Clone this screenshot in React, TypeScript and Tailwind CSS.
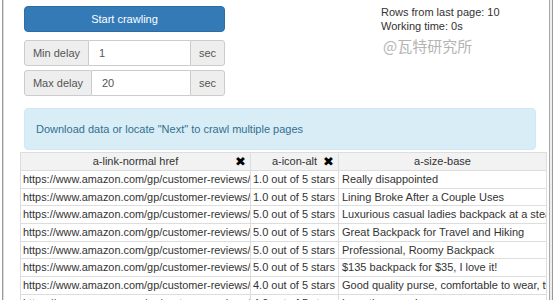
const ROWS = [
  ["1.0 out of 5 stars", "Really disappointed"],
  ["1.0 out of 5 stars", "Lining Broke After a Couple Uses"],
  ["5.0 out of 5 stars", "Luxurious casual ladies backpack at a steal"],
  ["5.0 out of 5 stars", "Great Backpack for Travel and Hiking"],
  ["5.0 out of 5 stars", "Professional, Roomy Backpack"],
  ["5.0 out of 5 stars", "$135 backpack for $35, I love it!"],
  ["4.0 out of 5 stars", "Good quality purse, comfortable to wear, two thumbs up"],
  ["4.0 out of 5 stars", "Love the purse!"],
];

const HREF = "https://www.amazon.com/gp/customer-reviews/R2KX0ZQ8Y1S9KD";

const InputGroup = ({ label, value, labelWidth }: { label: string; value: string; labelWidth: string }) => {
  return (
    <div className="flex h-[26px] w-[201px] text-[11px]">
      <div
        className={`${labelWidth} flex items-center justify-center rounded-l-[3px] border border-[#cccccc] bg-[#eeeeee] text-[#555555]`}
      >
        {label}
      </div>
      <div className="flex flex-1 items-center border-y border-[#cccccc] bg-white pl-[10px] text-[#555555]">
        {value}
      </div>
      <div className="flex w-[35px] items-center justify-center rounded-r-[3px] border border-[#cccccc] bg-[#eeeeee] text-[#555555]">
        sec
      </div>
    </div>
  );
};

const HeaderCell = ({ label, closable }: { label: string; closable: boolean }) => {
  return (
    <th className="relative h-[18px] border border-[#dddddd] bg-[#f2f2f2] p-0 text-center font-normal text-[#333333]">
      {label}
      {closable && (
        <span className="absolute right-[4px] top-0 font-['DejaVu_Sans',sans-serif] text-[13px] leading-[17px] text-black">
          ✖
        </span>
      )}
    </th>
  );
};

const App = () => {
  return (
    <div className="flex h-[300px] w-[558px] items-start overflow-hidden bg-white font-['Liberation_Sans',Arial,sans-serif] text-[11px] text-[#333333]">
      <div className="w-[2px]" />
      <div className="h-[300px] w-px bg-[#9a9a9a]" />
      <div className="h-[300px] w-px bg-[#dcdcdc]" />
      <div className="flex w-[545px] shrink-0 flex-col">
        <div className="flex shrink-0 pl-5">
          <div className="flex w-[201px] flex-col">
            <button className="mt-[6px] h-[26px] rounded-[4px] border border-[#2e6da4] bg-[#337ab7] text-[11px] text-white">
              Start crawling
            </button>
            <div className="mt-2">
              <InputGroup label="Min delay" value="1" labelWidth="w-[65px]" />
            </div>
            <div className="mt-1">
              <InputGroup label="Max delay" value="20" labelWidth="w-[68px]" />
            </div>
          </div>
          <div className="ml-[156px] flex flex-col pt-[5px] leading-[14px]">
            <div>Rows from last page: 10</div>
            <div>Working time: 0s</div>
            <div className="ml-[2px] mt-[4px] font-['Noto_Sans_CJK_SC',sans-serif] text-[15px] leading-[17px] text-[#b4b4b4]">
              @瓦特研究所
            </div>
          </div>
        </div>
        <div className="ml-5 mr-[13px] mt-[12px] flex h-[42px] shrink-0 items-center rounded-[4px] border border-[#cfe8f3] bg-[#d9edf7] pl-[11px] text-[11px] text-[#31708f]">
          Download data or locate "Next" to crawl multiple pages
        </div>
        <table className="ml-4 mt-[2px] w-[526px] shrink-0 table-fixed border-collapse text-[11px]">
          <colgroup>
            <col className="w-[230px]" />
            <col className="w-[88px]" />
            <col className="w-[208px]" />
          </colgroup>
          <thead>
            <tr>
              <HeaderCell label="a-link-normal href" closable={true} />
              <HeaderCell label="a-icon-alt" closable={true} />
              <HeaderCell label="a-size-base" closable={false} />
            </tr>
          </thead>
          <tbody>
            {ROWS.map((row, index) => {
              return (
                <tr key={index} className="h-[17.7px]">
                  <td className="overflow-hidden whitespace-nowrap border border-[#dddddd] p-0 pl-[2px] text-[10.9px] leading-[15px]">
                    {HREF}
                  </td>
                  <td className="overflow-hidden whitespace-nowrap border border-[#dddddd] p-0 pl-[2px] leading-[15px]">
                    {row[0]}
                  </td>
                  <td className="overflow-hidden whitespace-nowrap border border-[#dddddd] p-0 pl-[3px] leading-[15px]">
                    {row[1]}
                  </td>
                </tr>
              );
            })}
          </tbody>
        </table>
      </div>
      <div className="h-[300px] w-px bg-[#a8a8a8]" />
      <div className="h-[300px] w-[2px] bg-[#eeeeee]" />
      <div className="h-[300px] w-px bg-[#999999]" />
    </div>
  );
};

export default App;
